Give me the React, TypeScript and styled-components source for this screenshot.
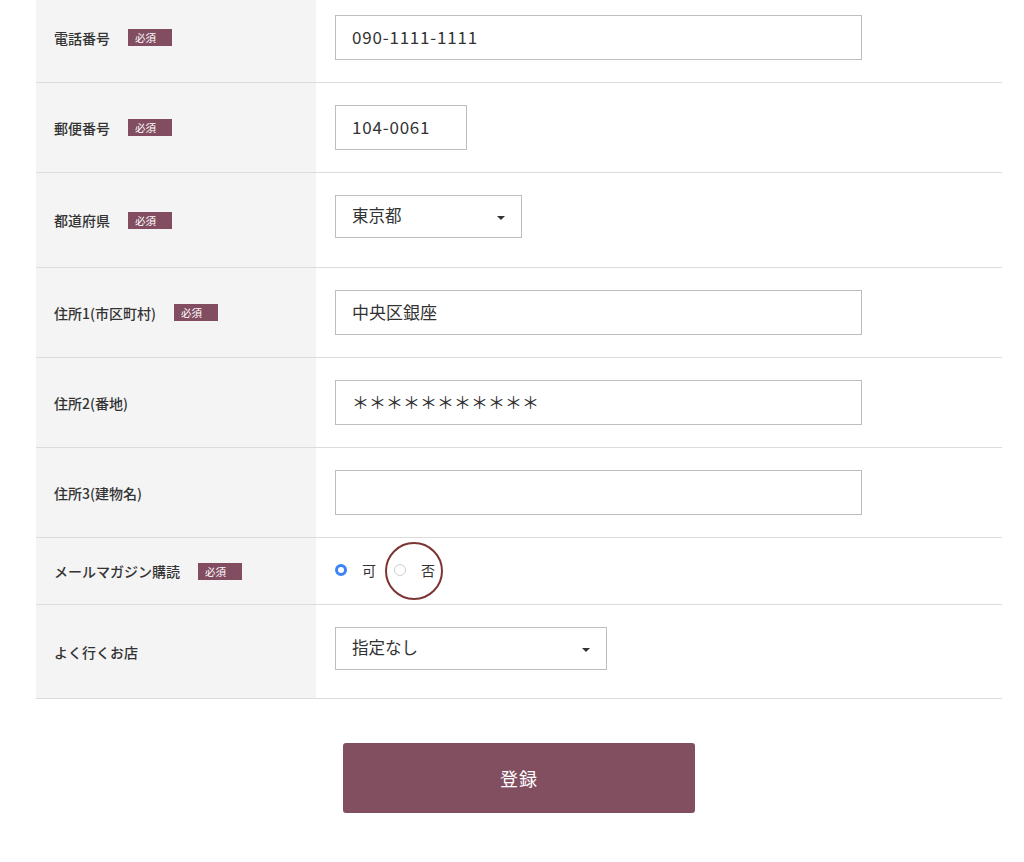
import React from 'react';
import styled, { createGlobalStyle } from 'styled-components';

const GlobalStyle = createGlobalStyle`
  html, body {
    margin: 0;
    padding: 0;
    background: #fff;
    overflow: hidden;
  }
  body {
    font-family: "Noto Sans CJK JP", "Noto Sans", "Liberation Sans", sans-serif;
    color: #333;
  }
`;

const Page = styled.div`
  width: 966px;
  margin: -7px 0 0 36px;
`;

const Table = styled.div`
  display: flex;
  flex-direction: column;
`;

const Row = styled.div<{ $h: number }>`
  display: grid;
  grid-template-columns: 280px 1fr;
  box-sizing: border-box;
  height: ${({ $h }) => $h}px;
  border-bottom: 1px solid #dcdcdc;
`;

const LabelCell = styled.div`
  background: #f4f4f4;
  display: flex;
  align-items: center;
  padding-left: 18px;
  font-size: 14px;
  font-weight: 500;
  color: #333;
`;

const Badge = styled.span`
  display: inline-block;
  margin-left: 18px;
  width: 44px;
  height: 17px;
  line-height: 17px;
  padding-left: 7px;
  box-sizing: border-box;
  background: #824d60;
  color: #fff;
  font-size: 10.5px;
  font-weight: 400;
`;

const ValueCell = styled.div<{ $center?: boolean }>`
  display: flex;
  align-items: ${({ $center }) => ($center ? 'center' : 'flex-start')};
  padding: ${({ $center }) => ($center ? '0' : '22px')} 0 0 19px;
`;

const TextBox = styled.div<{ $w: number; $digits?: boolean }>`
  width: ${({ $w }) => $w}px;
  height: 45px;
  box-sizing: border-box;
  border: 1px solid #bdbdbd;
  background: #fff;
  display: flex;
  align-items: center;
  padding: 0 0 3px 16px;
  font-size: 17px;
  font-weight: 400;
  color: #333;
  letter-spacing: ${({ $digits }) => ($digits ? '0.8px' : '0')};
`;

const SelectBox = styled.div<{ $w: number }>`
  position: relative;
  width: ${({ $w }) => $w}px;
  height: 43px;
  box-sizing: border-box;
  border: 1px solid #bdbdbd;
  background: #fff;
  display: flex;
  align-items: center;
  padding: 0 0 4px 16px;
  font-size: 16.5px;
  color: #333;

  &::after {
    content: '';
    position: absolute;
    right: 16px;
    top: 20px;
    border-left: 4px solid transparent;
    border-right: 4px solid transparent;
    border-top: 4px solid #333;
  }
`;

const RadioGroup = styled.div`
  display: flex;
  align-items: center;
  gap: 18px;
  padding-bottom: 2px;
`;

const Option = styled.label`
  position: relative;
  display: flex;
  align-items: center;
  gap: 15px;
  font-size: 14px;
  color: #333;
`;

const RadioDot = styled.span<{ $checked?: boolean }>`
  display: inline-block;
  width: 12px;
  height: 12px;
  border-radius: 50%;
  box-sizing: border-box;
  background: #fff;
  border: ${({ $checked }) => ($checked ? '3.5px solid #3b82f6' : '1px solid #cfcfcf')};
`;

const Marker = styled.span`
  position: absolute;
  left: -9px;
  top: 50%;
  width: 54px;
  height: 54px;
  margin-top: -28px;
  border: 2px solid #7c3434;
  border-radius: 50%;
  pointer-events: none;
`;

const Footer = styled.div`
  display: flex;
  justify-content: center;
  padding-top: 44px;
`;

const SubmitButton = styled.button`
  width: 352px;
  height: 70px;
  border: none;
  border-radius: 3px;
  background: #824f60;
  color: #fff;
  font-family: inherit;
  font-size: 18px;
  letter-spacing: 1px;
  cursor: pointer;
`;

const rows = [
  { label: '電話番号', req: true, h: 90, kind: 'text', w: 527, value: '090-1111-1111', digits: true },
  { label: '郵便番号', req: true, h: 90, kind: 'text', w: 132, value: '104-0061', digits: true },
  { label: '都道府県', req: true, h: 95, kind: 'select', w: 187, value: '東京都' },
  { label: '住所1(市区町村)', req: true, h: 90, kind: 'text', w: 527, value: '中央区銀座' },
  { label: '住所2(番地)', req: false, h: 90, kind: 'text', w: 527, value: '＊＊＊＊＊＊＊＊＊＊＊' },
  { label: '住所3(建物名)', req: false, h: 90, kind: 'text', w: 527, value: '' },
  { label: 'メールマガジン購読', req: true, h: 67, kind: 'radio', w: 0, value: '' },
  { label: 'よく行くお店', req: false, h: 94, kind: 'select', w: 272, value: '指定なし' },
];

export default function App() {
  return (
    <>
      <GlobalStyle />
      <Page>
        <Table>
          {rows.map((r) => (
            <Row key={r.label} $h={r.h}>
              <LabelCell>
                {r.label}
                {r.req && <Badge>必須</Badge>}
              </LabelCell>
              <ValueCell $center={r.kind === 'radio'}>
                {r.kind === 'text' && (
                  <TextBox $w={r.w} $digits={r.digits}>
                    {r.value}
                  </TextBox>
                )}
                {r.kind === 'select' && <SelectBox $w={r.w}>{r.value}</SelectBox>}
                {r.kind === 'radio' && (
                  <RadioGroup>
                    <Option>
                      <RadioDot $checked />可
                    </Option>
                    <Option>
                      <Marker />
                      <RadioDot />否
                    </Option>
                  </RadioGroup>
                )}
              </ValueCell>
            </Row>
          ))}
        </Table>
        <Footer>
          <SubmitButton>登録</SubmitButton>
        </Footer>
      </Page>
    </>
  );
}
